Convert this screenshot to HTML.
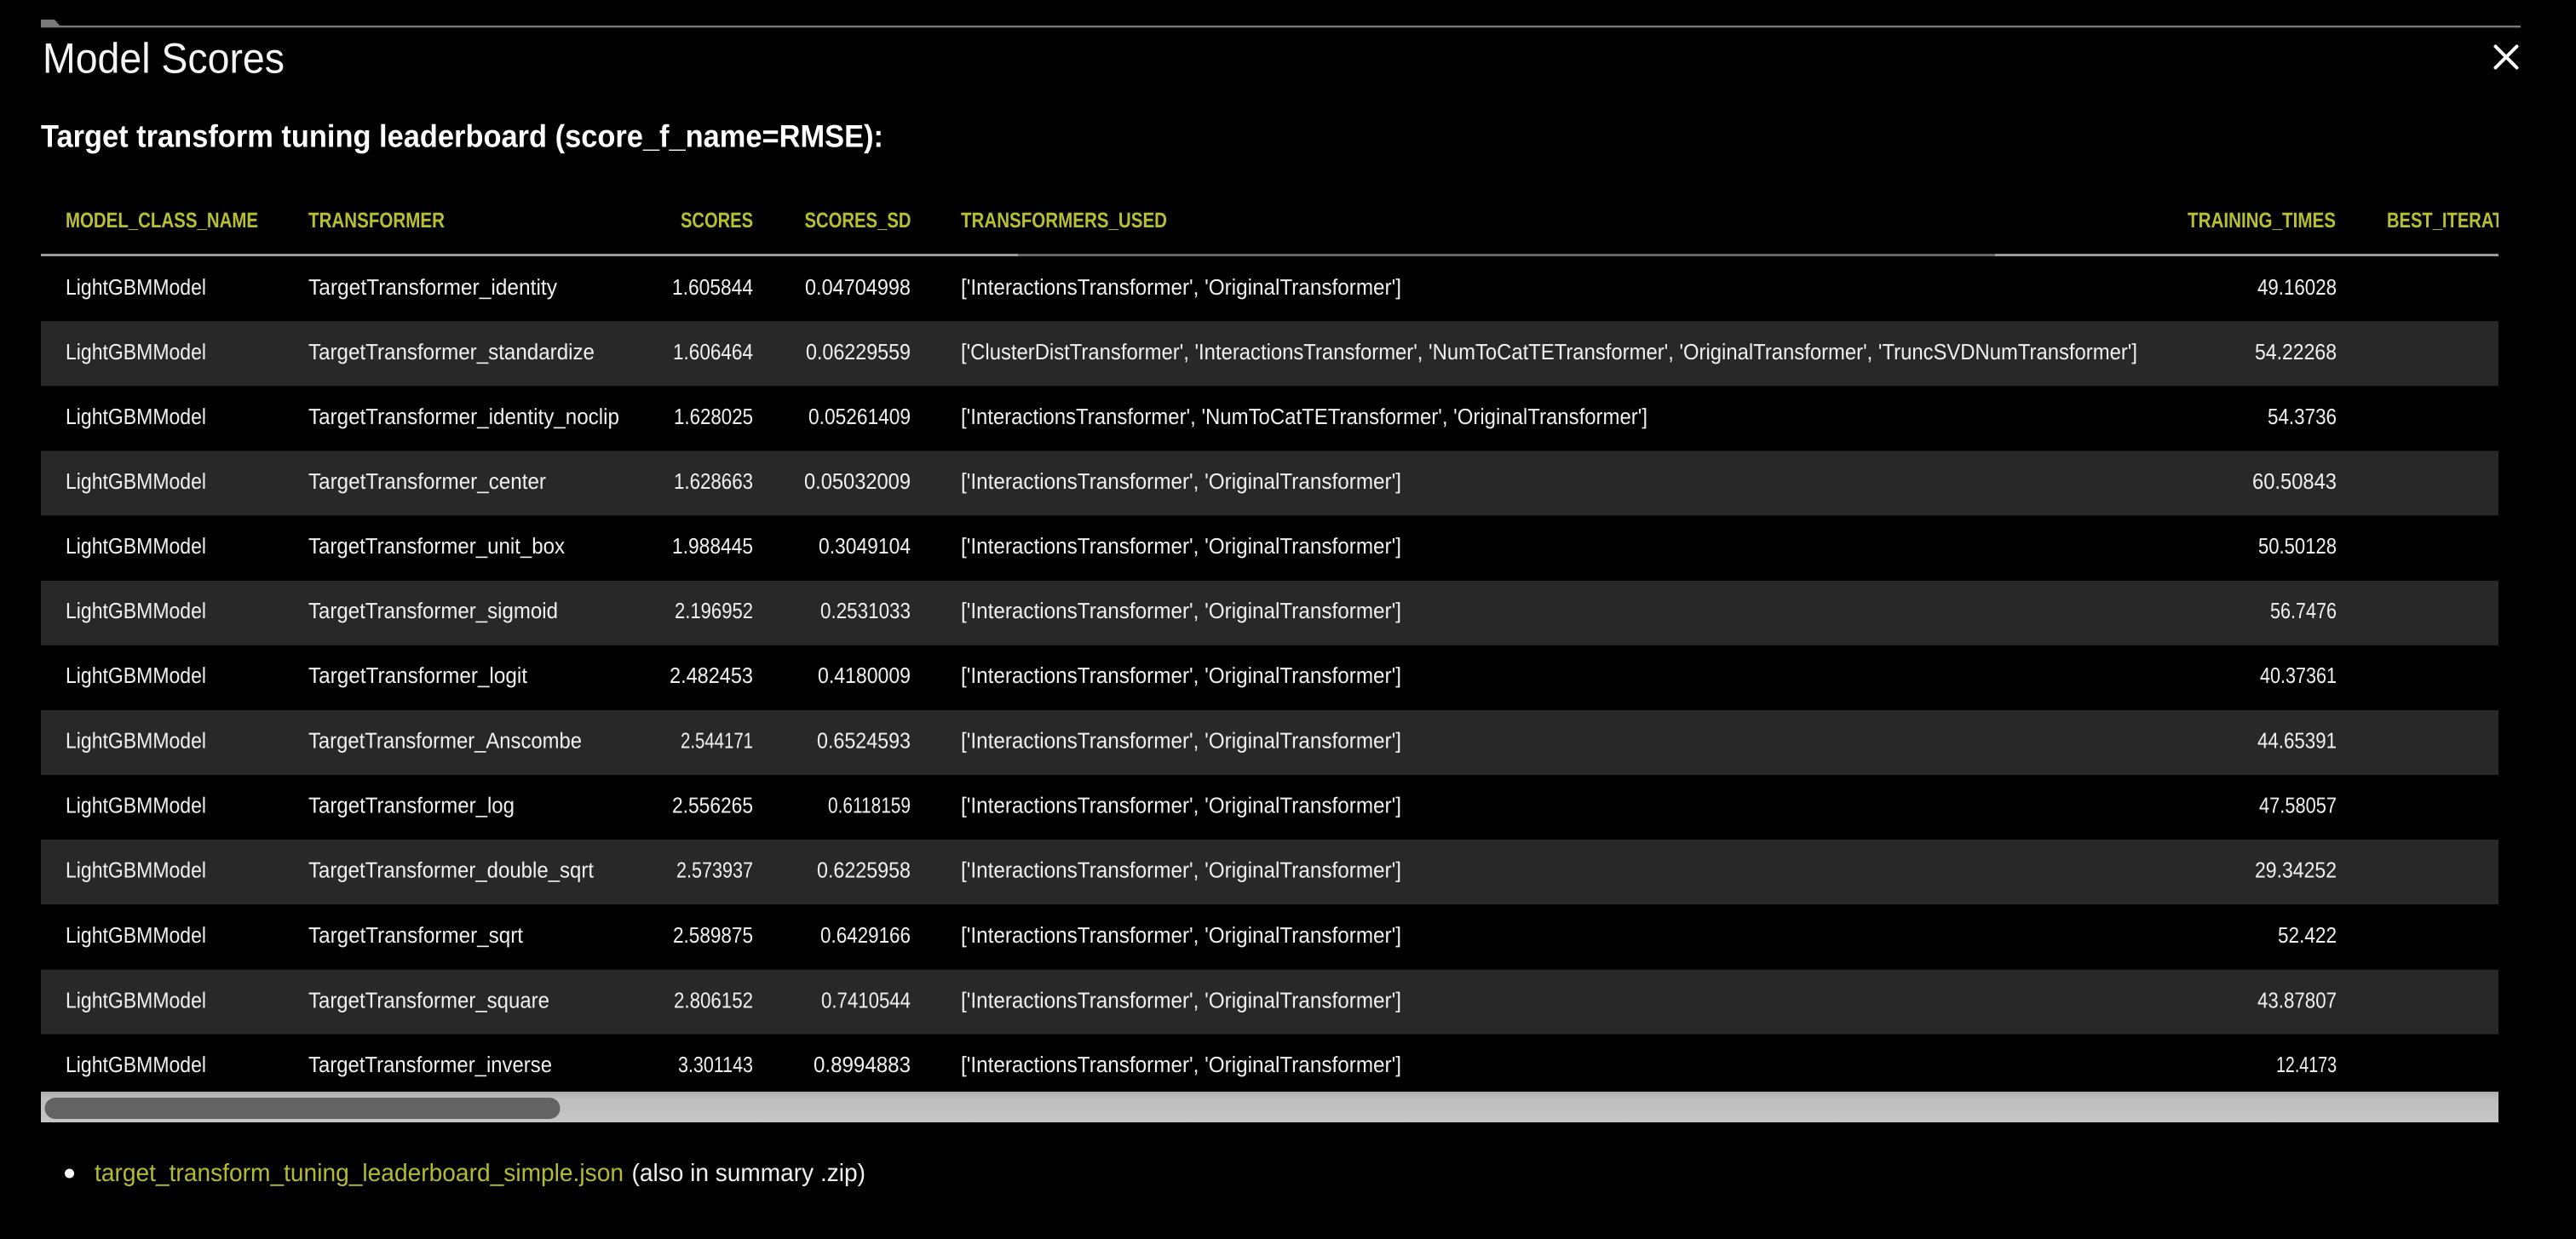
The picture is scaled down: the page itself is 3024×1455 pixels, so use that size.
<!DOCTYPE html>
<html lang="en">
<head>
<meta charset="utf-8">
<title>Model Scores</title>
<style>
html,body{margin:0;padding:0;background:#000;width:3024px;height:1455px;overflow:hidden}
svg{display:block}
text{font-family:"Liberation Sans",sans-serif;text-rendering:geometricPrecision}
.c{font-size:26px;fill:#f0f0f0}
.h{font-size:25px;font-weight:700;fill:#b8bf32}
</style>
</head>
<body>
<svg xmlns="http://www.w3.org/2000/svg" width="3024" height="1455" viewBox="0 0 3024 1455">
<defs>
<clipPath id="tbl"><rect x="48" y="220" width="2885" height="1062"/></clipPath>
<linearGradient id="trk" x1="0" y1="0" x2="0" y2="1"><stop offset="0" stop-color="#adadad"/><stop offset=".22" stop-color="#bdbdbd"/><stop offset="1" stop-color="#c6c6c6"/></linearGradient>
</defs>
<rect width="3024" height="1455" fill="#000"/>
<polygon points="48,23 64,23 70,30 70,32 48,32" fill="#7a7a7a"/>
<rect x="48" y="30" width="2911" height="2.4" fill="#7a7a7a"/>
<text x="50" y="85.5" font-size="50" fill="#f4f4f4" textLength="284" lengthAdjust="spacingAndGlyphs">Model Scores</text>
<path d="M2929.5 54.5L2954.5 79.5M2954.5 54.5L2929.5 79.5" stroke="#fff" stroke-width="4" stroke-linecap="round" fill="none"/>
<text x="48" y="172.5" font-size="37" font-weight="700" fill="#fff" textLength="989" lengthAdjust="spacingAndGlyphs">Target transform tuning leaderboard (score_f_name=RMSE):</text>

<rect x="48" y="377.2" width="2885" height="76" fill="#282828"/>
<rect x="48" y="529.4" width="2885" height="76" fill="#282828"/>
<rect x="48" y="681.8" width="2885" height="76" fill="#282828"/>
<rect x="48" y="834" width="2885" height="76" fill="#282828"/>
<rect x="48" y="986" width="2885" height="76" fill="#282828"/>
<rect x="48" y="1138.6" width="2885" height="76" fill="#282828"/>

<rect x="48" y="298" width="1147" height="3" fill="#9c9c9c"/>
<rect x="1195" y="298" width="1147" height="3" fill="#666"/>
<rect x="2342" y="298" width="591" height="3" fill="#9c9c9c"/>

<g clip-path="url(#tbl)">
<text class="h" y="267" x="77" textLength="226" lengthAdjust="spacingAndGlyphs">MODEL_CLASS_NAME</text>
<text class="h" y="267" x="362" textLength="160" lengthAdjust="spacingAndGlyphs">TRANSFORMER</text>
<text class="h" y="267" x="799" textLength="85" lengthAdjust="spacingAndGlyphs">SCORES</text>
<text class="h" y="267" x="944.5" textLength="125" lengthAdjust="spacingAndGlyphs">SCORES_SD</text>
<text class="h" y="267" x="1128" textLength="242" lengthAdjust="spacingAndGlyphs">TRANSFORMERS_USED</text>
<text class="h" y="267" x="2568" textLength="174" lengthAdjust="spacingAndGlyphs">TRAINING_TIMES</text>
<text class="h" y="267" x="2802" textLength="172" lengthAdjust="spacingAndGlyphs">BEST_ITERATION</text>

<text class="c" y="346" x="77" textLength="165" lengthAdjust="spacingAndGlyphs">LightGBMModel</text>
<text class="c" y="346" x="362" textLength="292" lengthAdjust="spacingAndGlyphs">TargetTransformer_identity</text>
<text class="c" y="346" x="789" textLength="95" lengthAdjust="spacingAndGlyphs">1.605844</text>
<text class="c" y="346" x="945" textLength="124" lengthAdjust="spacingAndGlyphs">0.04704998</text>
<text class="c" y="346" x="1128" textLength="517" lengthAdjust="spacingAndGlyphs">['InteractionsTransformer', 'OriginalTransformer']</text>
<text class="c" y="346" x="2650" textLength="93" lengthAdjust="spacingAndGlyphs">49.16028</text>

<text class="c" y="422" x="77" textLength="165" lengthAdjust="spacingAndGlyphs">LightGBMModel</text>
<text class="c" y="422" x="362" textLength="336" lengthAdjust="spacingAndGlyphs">TargetTransformer_standardize</text>
<text class="c" y="422" x="790" textLength="94" lengthAdjust="spacingAndGlyphs">1.606464</text>
<text class="c" y="422" x="946" textLength="123" lengthAdjust="spacingAndGlyphs">0.06229559</text>
<text class="c" y="422" x="1128" textLength="1381" lengthAdjust="spacingAndGlyphs">['ClusterDistTransformer', 'InteractionsTransformer', 'NumToCatTETransformer', 'OriginalTransformer', 'TruncSVDNumTransformer']</text>
<text class="c" y="422" x="2647" textLength="96" lengthAdjust="spacingAndGlyphs">54.22268</text>

<text class="c" y="498" x="77" textLength="165" lengthAdjust="spacingAndGlyphs">LightGBMModel</text>
<text class="c" y="498" x="362" textLength="365" lengthAdjust="spacingAndGlyphs">TargetTransformer_identity_noclip</text>
<text class="c" y="498" x="791" textLength="93" lengthAdjust="spacingAndGlyphs">1.628025</text>
<text class="c" y="498" x="949" textLength="120" lengthAdjust="spacingAndGlyphs">0.05261409</text>
<text class="c" y="498" x="1128" textLength="806" lengthAdjust="spacingAndGlyphs">['InteractionsTransformer', 'NumToCatTETransformer', 'OriginalTransformer']</text>
<text class="c" y="498" x="2662" textLength="81" lengthAdjust="spacingAndGlyphs">54.3736</text>

<text class="c" y="574" x="77" textLength="165" lengthAdjust="spacingAndGlyphs">LightGBMModel</text>
<text class="c" y="574" x="362" textLength="279" lengthAdjust="spacingAndGlyphs">TargetTransformer_center</text>
<text class="c" y="574" x="791" textLength="93" lengthAdjust="spacingAndGlyphs">1.628663</text>
<text class="c" y="574" x="944" textLength="125" lengthAdjust="spacingAndGlyphs">0.05032009</text>
<text class="c" y="574" x="1128" textLength="517" lengthAdjust="spacingAndGlyphs">['InteractionsTransformer', 'OriginalTransformer']</text>
<text class="c" y="574" x="2644" textLength="99" lengthAdjust="spacingAndGlyphs">60.50843</text>

<text class="c" y="650" x="77" textLength="165" lengthAdjust="spacingAndGlyphs">LightGBMModel</text>
<text class="c" y="650" x="362" textLength="301" lengthAdjust="spacingAndGlyphs">TargetTransformer_unit_box</text>
<text class="c" y="650" x="789" textLength="95" lengthAdjust="spacingAndGlyphs">1.988445</text>
<text class="c" y="650" x="961" textLength="108" lengthAdjust="spacingAndGlyphs">0.3049104</text>
<text class="c" y="650" x="1128" textLength="517" lengthAdjust="spacingAndGlyphs">['InteractionsTransformer', 'OriginalTransformer']</text>
<text class="c" y="650" x="2651" textLength="92" lengthAdjust="spacingAndGlyphs">50.50128</text>

<text class="c" y="726" x="77" textLength="165" lengthAdjust="spacingAndGlyphs">LightGBMModel</text>
<text class="c" y="726" x="362" textLength="293" lengthAdjust="spacingAndGlyphs">TargetTransformer_sigmoid</text>
<text class="c" y="726" x="792" textLength="92" lengthAdjust="spacingAndGlyphs">2.196952</text>
<text class="c" y="726" x="963" textLength="106" lengthAdjust="spacingAndGlyphs">0.2531033</text>
<text class="c" y="726" x="1128" textLength="517" lengthAdjust="spacingAndGlyphs">['InteractionsTransformer', 'OriginalTransformer']</text>
<text class="c" y="726" x="2665" textLength="78" lengthAdjust="spacingAndGlyphs">56.7476</text>

<text class="c" y="802" x="77" textLength="165" lengthAdjust="spacingAndGlyphs">LightGBMModel</text>
<text class="c" y="802" x="362" textLength="257" lengthAdjust="spacingAndGlyphs">TargetTransformer_logit</text>
<text class="c" y="802" x="786" textLength="98" lengthAdjust="spacingAndGlyphs">2.482453</text>
<text class="c" y="802" x="960" textLength="109" lengthAdjust="spacingAndGlyphs">0.4180009</text>
<text class="c" y="802" x="1128" textLength="517" lengthAdjust="spacingAndGlyphs">['InteractionsTransformer', 'OriginalTransformer']</text>
<text class="c" y="802" x="2653" textLength="90" lengthAdjust="spacingAndGlyphs">40.37361</text>

<text class="c" y="878.5" x="77" textLength="165" lengthAdjust="spacingAndGlyphs">LightGBMModel</text>
<text class="c" y="878.5" x="362" textLength="321" lengthAdjust="spacingAndGlyphs">TargetTransformer_Anscombe</text>
<text class="c" y="878.5" x="799" textLength="85" lengthAdjust="spacingAndGlyphs">2.544171</text>
<text class="c" y="878.5" x="959" textLength="110" lengthAdjust="spacingAndGlyphs">0.6524593</text>
<text class="c" y="878.5" x="1128" textLength="517" lengthAdjust="spacingAndGlyphs">['InteractionsTransformer', 'OriginalTransformer']</text>
<text class="c" y="878.5" x="2650" textLength="93" lengthAdjust="spacingAndGlyphs">44.65391</text>

<text class="c" y="954.5" x="77" textLength="165" lengthAdjust="spacingAndGlyphs">LightGBMModel</text>
<text class="c" y="954.5" x="362" textLength="242" lengthAdjust="spacingAndGlyphs">TargetTransformer_log</text>
<text class="c" y="954.5" x="789" textLength="95" lengthAdjust="spacingAndGlyphs">2.556265</text>
<text class="c" y="954.5" x="972" textLength="97" lengthAdjust="spacingAndGlyphs">0.6118159</text>
<text class="c" y="954.5" x="1128" textLength="517" lengthAdjust="spacingAndGlyphs">['InteractionsTransformer', 'OriginalTransformer']</text>
<text class="c" y="954.5" x="2652" textLength="91" lengthAdjust="spacingAndGlyphs">47.58057</text>

<text class="c" y="1030.5" x="77" textLength="165" lengthAdjust="spacingAndGlyphs">LightGBMModel</text>
<text class="c" y="1030.5" x="362" textLength="335" lengthAdjust="spacingAndGlyphs">TargetTransformer_double_sqrt</text>
<text class="c" y="1030.5" x="794" textLength="90" lengthAdjust="spacingAndGlyphs">2.573937</text>
<text class="c" y="1030.5" x="959" textLength="110" lengthAdjust="spacingAndGlyphs">0.6225958</text>
<text class="c" y="1030.5" x="1128" textLength="517" lengthAdjust="spacingAndGlyphs">['InteractionsTransformer', 'OriginalTransformer']</text>
<text class="c" y="1030.5" x="2647" textLength="96" lengthAdjust="spacingAndGlyphs">29.34252</text>

<text class="c" y="1107" x="77" textLength="165" lengthAdjust="spacingAndGlyphs">LightGBMModel</text>
<text class="c" y="1107" x="362" textLength="252" lengthAdjust="spacingAndGlyphs">TargetTransformer_sqrt</text>
<text class="c" y="1107" x="790" textLength="94" lengthAdjust="spacingAndGlyphs">2.589875</text>
<text class="c" y="1107" x="963" textLength="106" lengthAdjust="spacingAndGlyphs">0.6429166</text>
<text class="c" y="1107" x="1128" textLength="517" lengthAdjust="spacingAndGlyphs">['InteractionsTransformer', 'OriginalTransformer']</text>
<text class="c" y="1107" x="2674" textLength="69" lengthAdjust="spacingAndGlyphs">52.422</text>

<text class="c" y="1183.5" x="77" textLength="165" lengthAdjust="spacingAndGlyphs">LightGBMModel</text>
<text class="c" y="1183.5" x="362" textLength="283" lengthAdjust="spacingAndGlyphs">TargetTransformer_square</text>
<text class="c" y="1183.5" x="791" textLength="93" lengthAdjust="spacingAndGlyphs">2.806152</text>
<text class="c" y="1183.5" x="964" textLength="105" lengthAdjust="spacingAndGlyphs">0.7410544</text>
<text class="c" y="1183.5" x="1128" textLength="517" lengthAdjust="spacingAndGlyphs">['InteractionsTransformer', 'OriginalTransformer']</text>
<text class="c" y="1183.5" x="2650" textLength="93" lengthAdjust="spacingAndGlyphs">43.87807</text>

<text class="c" y="1259" x="77" textLength="165" lengthAdjust="spacingAndGlyphs">LightGBMModel</text>
<text class="c" y="1259" x="362" textLength="286" lengthAdjust="spacingAndGlyphs">TargetTransformer_inverse</text>
<text class="c" y="1259" x="796" textLength="88" lengthAdjust="spacingAndGlyphs">3.301143</text>
<text class="c" y="1259" x="955" textLength="114" lengthAdjust="spacingAndGlyphs">0.8994883</text>
<text class="c" y="1259" x="1128" textLength="517" lengthAdjust="spacingAndGlyphs">['InteractionsTransformer', 'OriginalTransformer']</text>
<text class="c" y="1259" x="2672" textLength="71" lengthAdjust="spacingAndGlyphs">12.4173</text>
</g>

<rect x="48" y="1282" width="2885" height="36" fill="url(#trk)"/>
<rect x="52.5" y="1289" width="605" height="25" rx="12.5" ry="12.5" fill="#636363"/>

<circle cx="81.5" cy="1378" r="5.5" fill="#fff"/>
<text x="111" y="1387" font-size="29" fill="#b4bb2e" textLength="621" lengthAdjust="spacingAndGlyphs">target_transform_tuning_leaderboard_simple.json</text>
<text x="741.5" y="1387" font-size="29" fill="#f0f0f0" textLength="274.5" lengthAdjust="spacingAndGlyphs">(also in summary .zip)</text>
</svg>
</body>
</html>
